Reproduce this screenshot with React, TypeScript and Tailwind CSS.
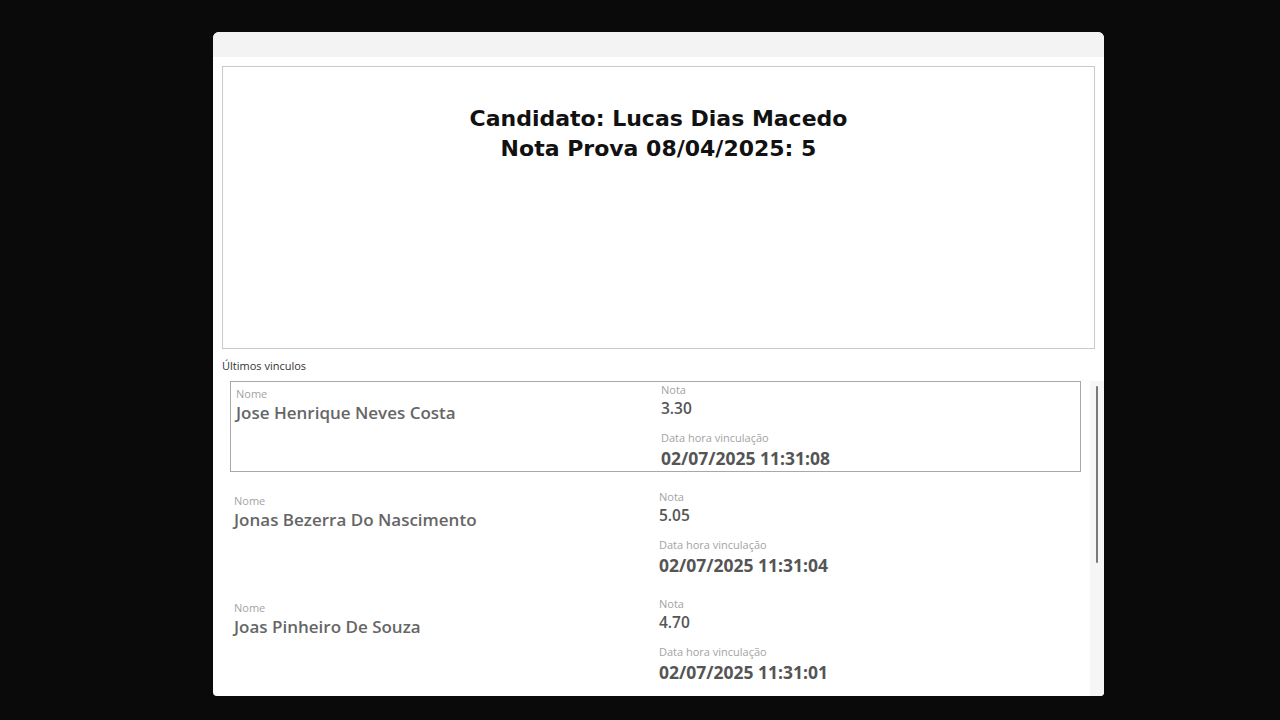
import React from 'react';

type Vinculo = {
  nome: string;
  nota: string;
  dataHora: string;
};

const vinculos: Vinculo[] = [
  { nome: 'Jose Henrique Neves Costa', nota: '3.30', dataHora: '02/07/2025 11:31:08' },
  { nome: 'Jonas Bezerra Do Nascimento', nota: '5.05', dataHora: '02/07/2025 11:31:04' },
  { nome: 'Joas Pinheiro De Souza', nota: '4.70', dataHora: '02/07/2025 11:31:01' },
];

const uiFont = { fontFamily: '"Open Sans", "Noto Sans", sans-serif' };

export default function App() {
  const selected = 0;

  return (
    <div className="w-[1280px] h-[720px] bg-[#0a0a0a] overflow-hidden pt-[32px] pl-[213px]" style={uiFont}>
      <div className="w-[891px] h-[664px] bg-white rounded-t-[6px] rounded-b-[4px] overflow-hidden flex flex-col">
        {/* title bar */}
        <div className="h-[25px] bg-[#f3f3f3] flex-none" />

        {/* candidate header */}
        <div className="px-[9px] pt-[9px] flex-none">
          <div className="h-[283px] border border-[#c9c9c9] pt-[37px] text-center">
            <h1
              className="text-[22px] leading-[30px] font-bold text-[#111]"
              style={{ fontFamily: '"DejaVu Sans", Verdana, sans-serif' }}
            >
              Candidato: Lucas Dias Macedo
              <br />
              Nota Prova 08/04/2025: 5
            </h1>
          </div>
        </div>

        <div className="px-[9px] pt-[9px] text-[11px] leading-[16px] text-[#333]">Últimos vinculos</div>

        {/* gallery */}
        <div className="flex-1 flex min-h-0 mt-[7px]">
          <div className="flex-1 pl-[17px] pr-[9px] overflow-hidden">
            {vinculos.map((v, i) => (
              <div key={v.nome} className={`h-[107px] ${i === selected ? '' : '-ml-[2px]'}`}>
                <div
                  className={`h-[91px] grid grid-cols-[430px_1fr] ${
                    i === selected ? 'border border-[#a8a8a8]' : 'border border-transparent'
                  }`}
                >
                  <div className="pl-[5px] pt-[4px]">
                    <div className="text-[11px] leading-[16px] text-[#a3a3a3]">Nome</div>
                    <div className="text-[17px] leading-[22px] font-semibold text-[#666]">{v.nome}</div>
                  </div>
                  <div>
                    <div className="text-[11px] leading-[16px] text-[#a3a3a3]">Nota</div>
                    <div className="text-[15.5px] leading-[20px] font-semibold text-[#555]">{v.nota}</div>
                    <div className="text-[11px] leading-[16px] text-[#a3a3a3] mt-[12px]">Data hora vinculação</div>
                    <div className="text-[17.5px] leading-[24px] font-bold text-[#555]">{v.dataHora}</div>
                  </div>
                </div>
              </div>
            ))}
          </div>

          {/* scrollbar */}
          <div className="w-[14px] bg-[#f6f6f6] flex justify-center pt-[5px]">
            <div className="w-[2px] h-[177px] bg-[#7a7a7a] rounded-full" />
          </div>
        </div>
      </div>
    </div>
  );
}
